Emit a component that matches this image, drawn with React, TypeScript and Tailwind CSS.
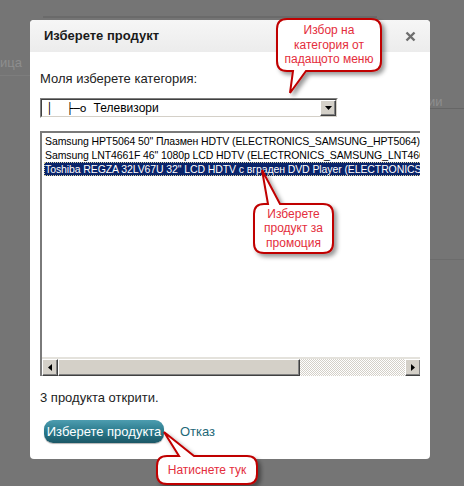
const items = [
  'Samsung HPT5064 50" Плазмен HDTV (ELECTRONICS_SAMSUNG_HPT5064)',
  'Samsung LNT4661F 46" 1080p LCD HDTV (ELECTRONICS_SAMSUNG_LNT4661F)',
  'Toshiba REGZA 32LV67U 32" LCD HDTV с вграден DVD Player (ELECTRONICS_TOSHIBA_32LV67U)',
];

const font = "font-['Liberation_Sans',Arial,sans-serif]";

function Callouts() {
  const red = "#c00000";
  return (
    <svg className="absolute inset-0 pointer-events-none" width="464" height="486">
      <defs>
        <filter id="sh" x="-20%" y="-20%" width="150%" height="150%">
          <feDropShadow dx="3" dy="3" stdDeviation="2" floodColor="#000" floodOpacity="0.4" />
        </filter>
      </defs>
      {/* top callout, tail down-left */}
      <path
        filter="url(#sh)"
        d="M287,19 H371 Q381,19 381,29 V61 Q381,71 371,71 H306 L290,93 L293,71 H287 Q277,71 277,61 V29 Q277,19 287,19 Z"
        fill="#fff"
        stroke={red}
        strokeWidth="2"
      />
      {/* middle callout, tail up-left */}
      <path
        filter="url(#sh)"
        d="M264,204 H268 L262,170 L280,204 H323 Q333,204 333,214 V243 Q333,253 323,253 H264 Q254,253 254,243 V214 Q254,204 264,204 Z"
        fill="#fff"
        stroke={red}
        strokeWidth="2"
      />
      {/* bottom callout */}
      <path
        filter="url(#sh)"
        d="M167,456 H179 L164,432 L194,456 H247 Q257,456 257,466 V474 Q257,484 247,484 H167 Q157,484 157,474 V466 Q157,456 167,456 Z"
        fill="#fff"
        stroke={red}
        strokeWidth="2"
      />
    </svg>
  );
}

function CalloutText({ x, y, w, h, lines }: { x: number; y: number; w: number; h: number; lines: string[] }) {
  return (
    <div
      className={`absolute flex flex-col items-center justify-center text-[12px] leading-[14.5px] text-[#e42d3c] ${font}`}
      style={{ left: x, top: y, width: w, height: h }}
    >
      {lines.map((l) => (
        <span key={l}>{l}</span>
      ))}
    </div>
  );
}

function Raised({ className = "", children }: { className?: string; children?: React.ReactNode }) {
  return (
    <div
      className={`bg-[#d4d0c8] border border-t-[#fff] border-l-[#fff] border-r-[#404040] border-b-[#404040] shadow-[inset_-1px_-1px_0_#808080] flex items-center justify-center ${className}`}
    >
      {children}
    </div>
  );
}

export default function App() {
  return (
    <div className={`relative w-[464px] h-[486px] bg-[#757575] overflow-hidden ${font}`}>
      {/* page behind the overlay */}
      <div className="absolute left-[43px] top-[16px] w-[334px] h-[2px] bg-[#6a6a6a]" />
      <div className="absolute left-0 top-[53px] text-[13px] text-[#8e8e8e]">ица</div>
      <div className="absolute left-0 top-[75px] w-[30px] h-px bg-[#7d7d7d]" />
      <div className="absolute left-[428px] top-[92px] text-[13px] text-[#8e8e8e]">ии</div>
      <div className="absolute left-[430px] top-[108px] w-[34px] h-px bg-[#666]" />
      <div className="absolute left-[430px] top-[259px] w-[34px] h-px bg-[#6c6c6c]" />

      <div className="relative pl-[30px] pt-[20px]">
        <div className="w-[400px] h-[439px] bg-white rounded-[4px] overflow-hidden flex flex-col">
          <div className="h-[32px] bg-gradient-to-b from-[#f6f6f6] to-[#ececec] flex items-center justify-between pl-[14px] pr-[14px]">
            <span className="text-[13px] font-bold text-[#1a1a1a]">Изберете продукт</span>
            <svg width="11" height="11" viewBox="0 0 11 11">
              <path d="M1.5 1.5 L9.5 9.5 M9.5 1.5 L1.5 9.5" stroke="#6e6e6e" strokeWidth="2.4" />
            </svg>
          </div>

          <div className="flex flex-col pl-[10px] pr-[10px]">
            <div className="mt-[19px] text-[13px] leading-[15px] text-[#222]">Моля изберете категория:</div>

            <div className="mt-[12px] w-[298px] h-[20px] border border-t-[#808080] border-l-[#808080] border-r-[#fff] border-b-[#fff] bg-[#d4d0c8]">
              <div className="h-full border border-t-[#404040] border-l-[#404040] border-r-[#d4d0c8] border-b-[#d4d0c8] bg-white flex items-center">
                <span className="flex-1 whitespace-pre text-black pl-[4px] font-['DejaVu_Sans',sans-serif] text-[11px]">
                  {"│    ├─o  "}
                  <span className={`${font} text-[12px]`}>Телевизори</span>
                </span>
                <Raised className="w-[16px] h-[16px]">
                  <svg width="7" height="4" viewBox="0 0 7 4">
                    <path d="M0 0 H7 L3.5 4 Z" fill="#000" />
                  </svg>
                </Raised>
              </div>
            </div>

            <div className="mt-[13px] w-[380px] overflow-hidden">
              <div className="w-[420px] h-[245px] border-t-2 border-l-2 border-t-[#7a7a7a] border-l-[#7a7a7a] bg-white flex flex-col">
                <div className="flex-1 pt-px pl-[2px] text-[10.5px] tracking-[-0.1px] text-black">
                  {items.map((t, i) => (
                    <div
                      key={t}
                      className={`h-[14px] leading-[12px] whitespace-nowrap border ${
                        i === 2
                          ? "bg-[#0a246a] text-white border-dotted border-[#d8d0a0]"
                          : "border-transparent"
                      }`}
                    >
                      {t}
                    </div>
                  ))}
                </div>
                <div className="h-[2px] bg-[#e4e2dc]" />
                <div className="h-[17px] flex w-[379px]">
                  <Raised className="w-[16px] h-full">
                    <svg width="4" height="7" viewBox="0 0 4 7">
                      <path d="M4 0 V7 L0 3.5 Z" fill="#000" />
                    </svg>
                  </Raised>
                  <Raised className="w-[242px] h-full" />
                  <div className="flex-1 h-full bg-[repeating-conic-gradient(#d4d0c8_0%_25%,#ffffff_0%_50%)] bg-[length:2px_2px]" />
                  <Raised className="w-[16px] h-full">
                    <svg width="4" height="7" viewBox="0 0 4 7">
                      <path d="M0 0 V7 L4 3.5 Z" fill="#000" />
                    </svg>
                  </Raised>
                </div>
              </div>
            </div>

            <div className="mt-[14px] text-[13px] leading-[15px] text-[#222]">3 продукта открити.</div>

            <div className="mt-[15px] flex items-center gap-[16px] pl-[4px]">
              <button className="w-[120px] h-[23px] rounded-[9px] bg-gradient-to-b from-[#4d9db0] via-[#2a7a8c] to-[#1b5766] text-white text-[13px] shadow-[0_1px_1px_rgba(0,0,0,0.3)]">
                Изберете продукта
              </button>
              <span className="text-[13px] text-[#1e6878]">Отказ</span>
            </div>
          </div>
        </div>
      </div>

      <Callouts />
      <CalloutText x={277} y={19} w={104} h={52} lines={["Избор на", "категория от", "падащото меню"]} />
      <CalloutText x={254} y={204} w={79} h={49} lines={["Изберете", "продукт за", "промоция"]} />
      <CalloutText x={157} y={456} w={100} h={28} lines={["Натиснете тук"]} />
    </div>
  );
}
